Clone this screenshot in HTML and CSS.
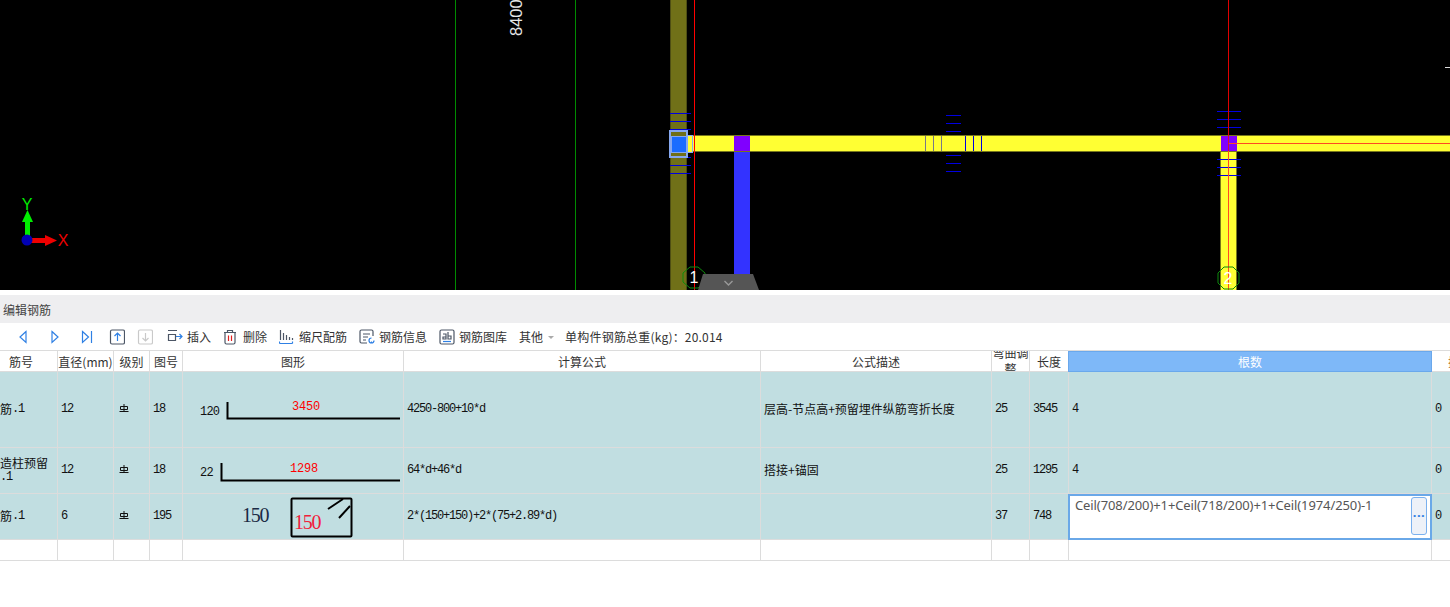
FILE: index.html
```html
<!DOCTYPE html>
<html lang="zh">
<head>
<meta charset="utf-8">
<title>编辑钢筋</title>
<link rel="stylesheet" href="styles.css">
</head>
<body>
<svg class="canvas" width="1450" height="290" viewBox="0 0 1450 290" shape-rendering="crispEdges">
  <rect width="1450" height="290" fill="#000"/>
  <g class="grid-ln">
    <rect x="455" y="0" width="1" height="290"/>
    <rect x="575" y="0" width="1" height="290"/>
  </g>
  <text class="dim" transform="translate(522 36) rotate(-90)">8400</text>
  <rect x="1445" y="67" width="5" height="1" fill="#ddd"/>

  <rect x="670" y="0" width="17" height="290" fill="#707018"/>
  <path d="M670.500 0V290M686.500 0V290" stroke="#4e4e14"/>
  <g class="tick">
    <rect x="670" y="113" width="21" height="1"/><rect x="670" y="121" width="21" height="1"/><rect x="670" y="129" width="21" height="1"/>
    <rect x="670" y="157" width="21" height="1"/><rect x="670" y="165" width="21" height="1"/><rect x="670" y="173" width="21" height="1"/>
  </g>

  <rect x="690" y="135" width="760" height="17" fill="#ffff33"/>
  <path d="M690 135.500H1450M690 151.500H1450" stroke="#77771c"/>

  <rect x="734" y="152" width="16" height="123" fill="#3333ff"/>
  <rect x="734" y="136" width="16" height="15" fill="#8000ff"/>

  <path d="M925.500 136V151M933.500 136V151M941.500 136V151" stroke="#77778a"/>
  <g class="tick">
    <rect x="965" y="136" width="1" height="15"/><rect x="973" y="136" width="1" height="15"/><rect x="981" y="136" width="1" height="15"/>
    <rect x="946" y="115" width="15" height="1"/><rect x="946" y="123" width="15" height="1"/><rect x="946" y="131" width="15" height="1"/>
    <rect x="946" y="155" width="15" height="1"/><rect x="946" y="163" width="15" height="1"/><rect x="946" y="171" width="15" height="1"/>
  </g>

  <rect x="1221" y="152" width="16" height="138" fill="#ffff33"/>
  <path d="M1220.500 152V290M1236.500 152V290" stroke="#77771c"/>
  <rect x="1221" y="136" width="16" height="15" fill="#8000ff"/>
  <g class="tick">
    <rect x="1217" y="111" width="24" height="1"/><rect x="1217" y="119" width="24" height="1"/><rect x="1217" y="127" width="24" height="1"/>
    <rect x="1217" y="159" width="24" height="1"/><rect x="1217" y="167" width="24" height="1"/><rect x="1217" y="175" width="24" height="1"/>
  </g>
  <path d="M1228 143.500H1450" stroke="#ff4a22"/>
  <path d="M1228.500 0V136" stroke="#e00000"/>
  <path d="M1228.500 136V151" stroke="#d0103a"/>
  <path d="M1228.500 151V290" stroke="#ff4a22"/>

  <path d="M694.500 0V290" stroke="#ff0000"/>

  <rect x="687" y="135" width="5" height="17" fill="#ffff33" stroke="#86a8f0"/>
  <rect x="670" y="131" width="17" height="26" fill="#707018" stroke="#86a8f0" stroke-width="2"/>
  <rect x="671" y="136" width="15" height="16" fill="#1a6cff" stroke="#86a8f0"/>

  <g shape-rendering="auto">
    <polygon points="690,267 698,267 705,273 705,282 698,288 690,288 683,282 683,273" fill="none" stroke="#0c8a0c"/>
    <text class="axis-no" x="694" y="283">1</text>
    <polygon points="1224,267 1233,267 1239,273 1239,283 1233,289 1224,289 1218,283 1218,273" fill="none" stroke="#0c8a0c"/>
    <text class="axis-no" x="1228" y="284">2</text>
    <polygon points="703,274 753,274 759,290 698,290" fill="#555"/>
    <path d="M724.500 281L728.500 285L732.500 281" fill="none" stroke="#999" stroke-width="1.400"/>

    <rect x="25" y="221" width="5" height="19" fill="#00ee00"/>
    <polygon points="27.500,210 33,222 22,222" fill="#00ee00"/>
    <rect x="27" y="238" width="19" height="5" fill="#ee0000"/>
    <polygon points="57,240.500 45,235 45,246" fill="#ee0000"/>
    <circle cx="27" cy="240" r="5.500" fill="#0000b4"/>
    <text class="axis-y" x="27" y="210">Y</text>
    <text class="axis-x" x="63" y="245.500">X</text>
  </g>
</svg>

<div class="gap"></div>
<div class="title">编辑钢筋</div>

<div class="toolbar">
  <span class="nav"><svg width="12" height="14" viewBox="0 0 12 14"><path d="M9 1.500L3 7L9 12.500Z" class="ln-b"/></svg></span>
  <span class="nav"><svg width="12" height="14" viewBox="0 0 12 14"><path d="M3 1.500L9 7L3 12.500Z" class="ln-b"/></svg></span>
  <span class="nav"><svg width="12" height="14" viewBox="0 0 12 14"><path d="M1.500 1.500L7.500 7L1.500 12.500ZM10.500 1V13" class="ln-b"/></svg></span>
  <span class="box"><svg width="16" height="16" viewBox="0 0 16 16"><rect x="1.500" y="1" width="14" height="14" rx="1.500" class="ln-d"/><path d="M8.500 12V4.500M5.500 7L8.500 4L11.500 7" class="ln-b"/></svg></span>
  <span class="box"><svg width="16" height="16" viewBox="0 0 16 16"><rect x="1.500" y="1" width="14" height="14" rx="1.500" class="ln-g"/><path d="M8.500 4V11.500M5.500 9L8.500 12L11.500 9" class="ln-g"/></svg></span>

  <span class="tools">
    <span class="tool"><svg width="16" height="16" viewBox="0 0 16 16"><path d="M1 1.500H10M1.500 5.500H8.500V11.500H1.500Z" class="ln-d"/><path d="M9 7.500H15M12.500 5L15 7.500L12.500 10" class="ln-b"/></svg>插入</span>
    <span class="tool"><svg width="16" height="16" viewBox="0 0 16 16"><path d="M1 3.500H13M4.500 3V1.500H9.500V3M2 4V13.500Q2 15 3.500 15H10.500Q12 15 12 13.500V4" class="ln-d"/><path d="M5.500 6.500V12M8.500 6.500V12" class="ln-r"/></svg>删除</span>
    <span class="tool"><svg width="16" height="16" viewBox="0 0 16 16"><path d="M1.500 1V11M4.500 4V11M7.500 6V11M10.500 8V11M13.500 9V11" class="ln-d"/><path d="M0.500 14.500H13.500M0.500 12.500V14.500M13.500 12.500V14.500" class="ln-b"/></svg>缩尺配筋</span>
    <span class="tool"><svg width="16" height="16" viewBox="0 0 16 16"><path d="M14 7V2.500Q14 1 12.500 1H2.500Q1 1 1 2.500V12.500Q1 14 2.500 14H8M4 5H11M4 8H9M4 11H7" class="ln-d"/><path d="M15 11.500A2.500 2.500 0 1 1 12.500 9M12.500 14.500V12.500" class="ln-b"/></svg>钢筋信息</span>
    <span class="tool"><svg width="16" height="16" viewBox="0 0 16 16"><rect x="1" y="1" width="14" height="14" rx="1.500" class="ln-d"/><path d="M4 5H7V10H4V8H7M9 3V10H12V7H9" class="ln-d"/><path d="M4 12.500H12" class="ln-b"/></svg>钢筋图库</span>
    <span class="more">其他<i class="caret"></i></span>
    <span class="total">单构件钢筋总重(kg)：20.014</span>
  </span>
</div>

<div class="sheet">
  <div class="row head">
    <div class="cell first-h">筋号</div>
    <div class="cell c">直径(mm)</div>
    <div class="cell c">级别</div>
    <div class="cell c">图号</div>
    <div class="cell c">图形</div>
    <div class="cell c">计算公式</div>
    <div class="cell c">公式描述</div>
    <div class="cell c wrap">弯曲调整</div>
    <div class="cell c">长度</div>
    <div class="cell c sel">根数</div>
    <div class="cell c last-h">搭接</div>
  </div>

  <div class="row r1">
    <div class="cell flush"><span class="cjk">筋</span>.1</div>
    <div class="cell">12</div>
    <div class="cell"><svg class="grade" width="10" height="9" viewBox="0 0 10 9"><path d="M1.500 2.500H8.500V5.500H1.500ZM5 0V8M0.500 7.500H9.500"/></svg></div>
    <div class="cell">18</div>
    <div class="cell shape">
      <svg width="220" height="75" viewBox="183 372 220 75">
        <text class="s-blk" x="200" y="415">120</text>
        <path d="M227.500 402V418.500H400" class="bar"/>
        <text class="s-red" x="292" y="410">3450</text>
      </svg>
    </div>
    <div class="cell">4250-800+10*d</div>
    <div class="cell cjk">层高-节点高+预留埋件纵筋弯折长度</div>
    <div class="cell">25</div>
    <div class="cell">3545</div>
    <div class="cell">4</div>
    <div class="cell">0</div>
  </div>

  <div class="row r2">
    <div class="cell flush stack"><span class="cjk">造柱预留</span><span>.1</span></div>
    <div class="cell">12</div>
    <div class="cell"><svg class="grade" width="10" height="9" viewBox="0 0 10 9"><path d="M1.500 2.500H8.500V5.500H1.500ZM5 0V8M0.500 7.500H9.500"/></svg></div>
    <div class="cell">18</div>
    <div class="cell shape">
      <svg width="220" height="45" viewBox="183 448 220 45">
        <text class="s-blk" x="200" y="476">22</text>
        <path d="M221.500 463V480.500H400" class="bar"/>
        <text class="s-red" x="290" y="472">1298</text>
      </svg>
    </div>
    <div class="cell">64*d+46*d</div>
    <div class="cell cjk">搭接+锚固</div>
    <div class="cell">25</div>
    <div class="cell">1295</div>
    <div class="cell">4</div>
    <div class="cell">0</div>
  </div>

  <div class="row r3">
    <div class="cell flush"><span class="cjk">筋</span>.1</div>
    <div class="cell">6</div>
    <div class="cell"><svg class="grade" width="10" height="9" viewBox="0 0 10 9"><path d="M1.500 2.500H8.500V5.500H1.500ZM5 0V8M0.500 7.500H9.500"/></svg></div>
    <div class="cell">195</div>
    <div class="cell shape">
      <svg width="220" height="45" viewBox="183 494 220 45">
        <text class="s-big" x="242" y="522">150</text>
        <rect x="291.500" y="498.500" width="60" height="38" rx="1" class="bar"/>
        <path d="M328 509L343 499M339 518L350 506" class="bar"/>
        <text class="s-big red" x="294" y="529">150</text>
      </svg>
    </div>
    <div class="cell">2*(150+150)+2*(75+2.89*d)</div>
    <div class="cell"></div>
    <div class="cell">37</div>
    <div class="cell">748</div>
    <div class="cell editor">
      <span class="editor-text">Ceil(708/200)+1+Ceil(718/200)+1+Ceil(1974/250)-1</span>
      <span class="editor-btn">...</span>
    </div>
    <div class="cell">0</div>
  </div>

  <div class="row r4">
    <div class="cell"></div><div class="cell"></div><div class="cell"></div><div class="cell"></div>
    <div class="cell"></div><div class="cell"></div><div class="cell"></div><div class="cell"></div>
    <div class="cell"></div><div class="cell"></div><div class="cell"></div>
  </div>
</div>
</body>
</html>
```

FILE: styles.css
```css
html, body {
  margin: 0;
  padding: 0;
  width: 1450px;
  height: 607px;
  overflow: hidden;
  background: #fff;
  font-family: "Noto Sans CJK SC", "Noto Sans", sans-serif;
  font-size: 12px;
  color: #333;
}

.canvas { display: block; }
.grid-ln rect { fill: #008a00; }
.tick rect { fill: #0000e0; }
.dim { font: 16.500px "Liberation Sans", sans-serif; fill: #e6e6e6; }
.axis-no { font: 16px "Liberation Sans", sans-serif; fill: #fff; text-anchor: middle; }
.axis-y { font: 16px "Liberation Sans", sans-serif; fill: #00ee00; text-anchor: middle; }
.axis-x { font: 16px "Liberation Sans", sans-serif; fill: #ee0000; text-anchor: middle; }

.gap { height: 5px; background: #fff; }

.title {
  height: 28px;
  line-height: 30px;
  padding-left: 3px;
  background: #eeeef0;
  color: #444;
}

.toolbar {
  display: flex;
  align-items: center;
  height: 27px;
  padding-left: 7px;
  background: #fff;
}
.nav { display: flex; justify-content: center; width: 32px; }
.box { display: flex; justify-content: center; width: 28px; }
.tools { display: flex; align-items: center; gap: 12px; margin-left: 8px; }
.tool { display: flex; align-items: center; gap: 4px; white-space: nowrap; }
.more { display: flex; align-items: center; white-space: nowrap; }
.caret {
  width: 0;
  height: 0;
  margin-left: 5px;
  margin-top: 2px;
  border-left: 3px solid transparent;
  border-right: 3px solid transparent;
  border-top: 3px solid #aaa;
}
.total { margin-left: -1px; white-space: nowrap; letter-spacing: 0.200px; }

.ln-b, .ln-d, .ln-g, .ln-r { fill: none; stroke-width: 1.200; }
.ln-b { stroke: #2f80e4; }
.ln-d { stroke: #4c5666; }
.ln-g { stroke: #c9c9c9; }
.ln-r { stroke: #e02020; }

.sheet { border-top: 1px solid #dcdcdc; }
.row {
  display: grid;
  grid-template-columns: 58px 56px 36px 33px 221px 357px 231px 38px 39px 363px 56px;
  width: 1508px;
  box-sizing: border-box;
}
.cell {
  display: flex;
  align-items: center;
  box-sizing: border-box;
  padding-left: 3px;
  border-right: 1px solid #dcdcdc;
  border-bottom: 1px solid #dcdcdc;
  overflow: hidden;
  white-space: nowrap;
  font: 12px/14px "Liberation Mono", "Noto Sans CJK SC", monospace;
  letter-spacing: -1.200px;
  color: #111;
}

.head { height: 21px; }
.head .cell {
  font: 12px/15px "Noto Sans CJK SC", sans-serif;
  letter-spacing: 0;
  color: #333;
  background: #fff;
}
.head .c { justify-content: center; padding-left: 0; }
.head .first-h { padding-left: 9px; }
.head .wrap { white-space: normal; text-align: center; line-height: 16px; }
.head .sel {
  margin-left: -1px;
  background: #7eb8f8;
  border: 1px solid #6aa8ec;
  color: #fff;
}
.head .last-h { justify-content: flex-start; padding-left: 16px; color: #b5651d; border-right: 0; }

.r1 { height: 76px; background: #c1dee1; }
.r2 { height: 46px; background: #c1dee1; }
.r3 { height: 46px; background: #c1dee1; }
.r4 { height: 21px; background: #fff; }
.r1 .cell, .r2 .cell, .r3 .cell { padding-bottom: 2px; }

.cjk {
  font: 12px/14px "Noto Sans CJK SC", sans-serif;
  letter-spacing: 0;
  color: #111;
}
.flush { padding-left: 0; }
.stack { flex-direction: column; align-items: flex-start; justify-content: center; }

.grade { margin-left: 2px; }
.grade path { fill: none; stroke: #111; stroke-width: 1; }

.r1 .shape, .r2 .shape, .r3 .shape { padding: 0; align-items: flex-start; }
.shape svg { display: block; }
.bar { fill: none; stroke: #000; stroke-width: 2; }
.s-blk { font: 12px "Liberation Mono", monospace; letter-spacing: -0.800px; fill: #111; }
.s-red { font: 12px "Liberation Mono", monospace; letter-spacing: -0.200px; fill: #f00; }
.s-big { font: 20px "Liberation Serif", serif; fill: #1a2a44; }
.s-big.red { fill: #f0203a; }

.r3 .editor {
  position: relative;
  align-items: flex-start;
  margin-left: -1px;
  padding: 1px 0 0 5px;
  background: #fff;
  border: 2px solid #6aa8e8;
  font: 13px/16px "Noto Sans", sans-serif;
  letter-spacing: -0.100px;
  color: #555;
}
.editor-text { flex: 1; }
.editor-btn {
  display: flex;
  align-items: center;
  justify-content: center;
  position: absolute;
  top: 1px;
  right: 3px;
  width: 16px;
  height: 38px;
  box-sizing: border-box;
  padding-bottom: 8px;
  border: 1px solid #7ab0ee;
  border-radius: 3px;
  background: #edf1f8;
  color: #2f80e4;
  font-weight: 700;
  letter-spacing: 0.500px;
}
```
